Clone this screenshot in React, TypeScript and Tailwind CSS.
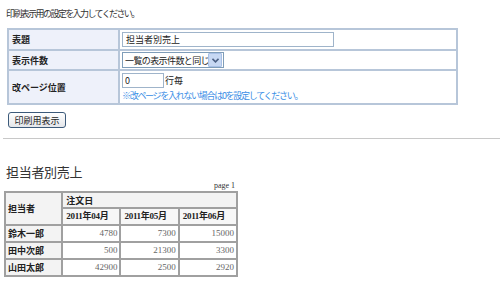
import React from 'react';

const gothic = { fontFamily: '"Noto Sans CJK JP", "Noto Sans", sans-serif' };

const sales = [
  { name: '鈴木一郎', v: [4780, 7300, 15000] },
  { name: '田中次郎', v: [500, 21300, 3300] },
  { name: '山田太郎', v: [42900, 2500, 2920] },
];

export default function App() {
  return (
    <div className="w-[500px] h-[289px] bg-white overflow-hidden text-[9px] leading-[11px] text-[#222] font-['Noto_Sans_CJK_JP',sans-serif]">
      {/* 説明文 */}
      <p className="ml-[6px] pt-[8px] tracking-[-1.6px] text-[#333]">印刷表示用の設定を入力してください。</p>

      {/* 設定テーブル */}
      <table className="ml-[7px] mt-[9px] w-[451px] border-separate border-spacing-0 border border-[#b7c6d9]">
        <tbody>
          <tr className="h-[21px]">
            <th className="w-[111px] bg-[#eef1fa] border border-[#b7c6d9] text-left font-bold pl-[3px]">表題</th>
            <td className="border border-[#b7c6d9] pl-[2px]">
              <input
                readOnly
                defaultValue="担当者別売上"
                className="block w-[212px] h-[15px] border border-[#9fb4ca] px-[3px] text-[9px] text-[#222] outline-none"
              />
            </td>
          </tr>
          <tr className="h-[20px]">
            <th className="bg-[#eef1fa] border border-[#b7c6d9] text-left font-bold pl-[3px]">表示件数</th>
            <td className="border border-[#b7c6d9] pl-[2px]">
              <div className="flex items-center w-[102px] h-[16px] border border-[#7f9db9] bg-white">
                <span className="flex-1 pl-[2px] overflow-hidden whitespace-nowrap tracking-[-0.6px]">一覧の表示件数と同じ</span>
                <span className="shrink-0 w-[14px] h-[14px] mr-[1px] flex items-center justify-center bg-[#c7d8f3] border border-[#a8c0e6] rounded-[1px]">
                  <svg width="7" height="5" viewBox="0 0 7 5">
                    <path d="M0.5 0.8 L3.5 3.8 L6.5 0.8" stroke="#4d6185" strokeWidth="1.6" fill="none" />
                  </svg>
                </span>
              </div>
            </td>
          </tr>
          <tr className="h-[34px]">
            <th className="bg-[#eef1fa] border border-[#b7c6d9] text-left font-bold pl-[3px]">改ページ位置</th>
            <td className="border border-[#b7c6d9] pl-[2px] align-top pt-[2px]">
              <div className="flex items-center">
                <input
                  readOnly
                  defaultValue="0"
                  className="block w-[42px] h-[15px] border border-[#9fb4ca] px-[2px] text-[9px] text-[#222] outline-none"
                />
                <span className="ml-[1px]">行毎</span>
              </div>
              <div className="mt-[2px] text-[#3a8ee6] tracking-[-1.3px]">※改ページを入れない場合は0を設定してください。</div>
            </td>
          </tr>
        </tbody>
      </table>

      {/* ボタン */}
      <button className="ml-[8px] mt-[7px] w-[58px] h-[16px] flex items-center justify-center rounded-[3px] border border-[#3c5a7a] bg-gradient-to-b from-[#ffffff] to-[#e4e6ea] text-[9px] text-[#222]">
        印刷用表示
      </button>

      <hr className="ml-[3px] mt-[10px] border-0 border-t border-[#c8c8c8]" />

      {/* 印刷イメージ */}
      <div className="ml-[4px] w-[234px]">
        <h1 className="mt-[25px] ml-[2px] text-[13px] leading-[15px] text-[#333] font-normal tracking-[-0.3px]">担当者別売上</h1>
        <div className="mt-[2px] text-right pr-[3px] text-[8px] leading-[10px] text-[#333] font-['Liberation_Serif',serif]">page 1</div>
        <table className="mt-[0px] w-[234px] border-separate border-spacing-0 border border-[#a0a0a0]">
          <tbody>
            <tr className="h-[16px]">
              <th rowSpan={2} className="w-[57px] bg-[#f3f3f3] border border-[#a0a0a0] text-left pl-[2px] font-bold" style={gothic}>担当者</th>
              <th colSpan={3} className="bg-[#f3f3f3] border border-[#a0a0a0] text-left pl-[3px] font-bold" style={gothic}>注文日</th>
            </tr>
            <tr className="h-[17px]">
              {['2011年04月', '2011年05月', '2011年06月'].map((m) => (
                <th key={m} className="w-[58px] bg-[#f7f7f7] border border-[#a0a0a0] text-left pl-[3px] font-bold font-['Liberation_Serif','Noto_Sans_CJK_JP',serif] tracking-[-0.3px]">
                  {m}
                </th>
              ))}
            </tr>
            {sales.map((r) => (
              <tr key={r.name} className="h-[17px]">
                <th className="bg-[#f3f3f3] border border-[#a0a0a0] text-left pl-[2px] font-bold" style={gothic}>{r.name}</th>
                {r.v.map((n, i) => (
                  <td key={i} className="border border-[#a0a0a0] text-right pr-[2px] text-[#666] font-['Liberation_Serif',serif] text-[9px]">
                    {n}
                  </td>
                ))}
              </tr>
            ))}
          </tbody>
        </table>
      </div>
    </div>
  );
}
